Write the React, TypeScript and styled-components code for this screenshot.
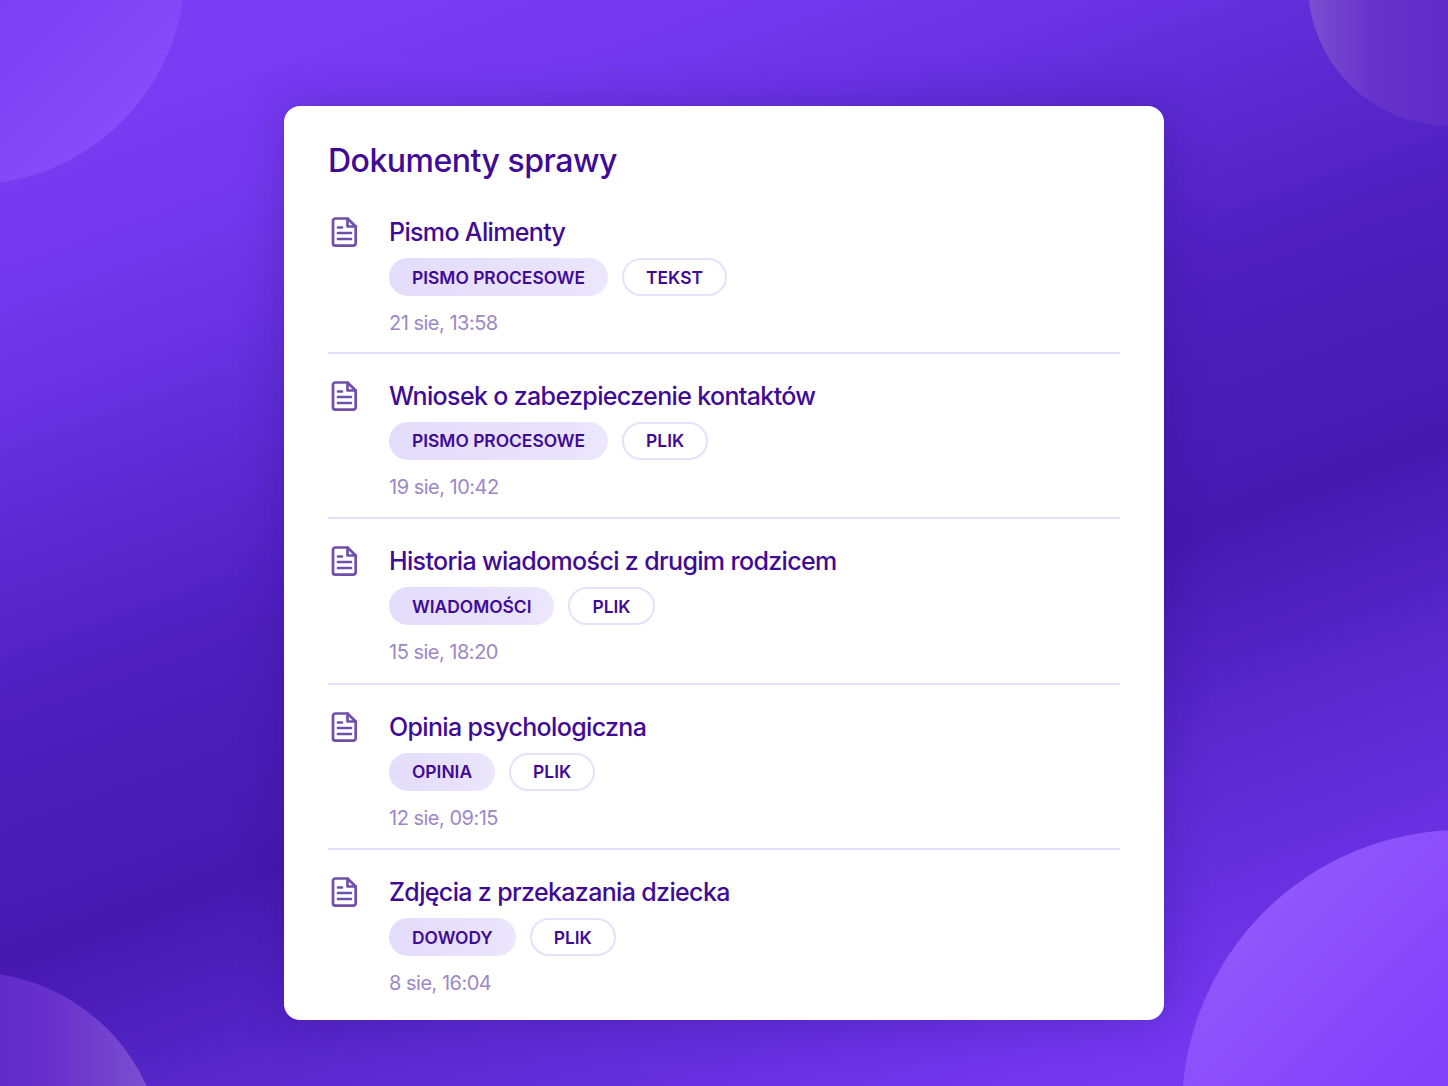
import React from "react";
import styled, { createGlobalStyle } from "styled-components";

const GlobalStyle = createGlobalStyle`
  html, body {
    margin: 0;
    padding: 0;
  }
  body {
    font-family: "Inter", "Noto Sans", sans-serif;
  }
`;

const Page = styled.div`
  position: relative;
  width: 1448px;
  height: 1086px;
  overflow: hidden;
  box-sizing: border-box;
  padding-top: 106px;
  display: flex;
  justify-content: center;
  align-items: flex-start;
  background: linear-gradient(
    160deg,
    #7c3ef6 0%,
    #753af0 16%,
    #6932e3 25%,
    #5c2bd4 33%,
    #4d1fbd 45%,
    #4519b0 60%,
    #5a2ad0 74%,
    #652fde 82%,
    #7337ee 90%,
    #7d3ff5 100%
  );
`;

const Bubble = styled.div<{ $size: number; $left: number; $top: number; $bg: string }>`
  position: absolute;
  width: ${(p) => p.$size}px;
  height: ${(p) => p.$size}px;
  left: ${(p) => p.$left}px;
  top: ${(p) => p.$top}px;
  border-radius: 50%;
  background: ${(p) => p.$bg};
`;

const Card = styled.section`
  position: relative;
  width: 880px;
  height: 914px;
  box-sizing: border-box;
  padding: 36px 44px 0;
  background: #fff;
  border-radius: 16px;
  box-shadow: 0 0 44px rgba(48, 14, 130, 0.32);
`;

const Title = styled.h1`
  margin: 0 0 8px;
  font-size: 32px;
  line-height: 38px;
  font-weight: 500;
  letter-spacing: -0.5px;
  color: #3f0b96;
`;

const Row = styled.article<{ $last?: boolean }>`
  display: flex;
  height: 165.5px;
  box-sizing: border-box;
  padding-top: 26px;
  border-bottom: ${(p) => (p.$last ? "none" : "2px solid #e3defa")};

  &:first-of-type {
    padding-top: 28px;
  }
`;

const IconSlot = styled.div`
  width: 61px;
  flex: none;
  color: #6f4fa8;
  svg {
    display: block;
  }
`;

const Body = styled.div`
  display: flex;
  flex-direction: column;
`;

const Name = styled.div`
  font-size: 25px;
  line-height: 32px;
  font-weight: 500;
  letter-spacing: -0.65px;
  color: #3f0b96;
`;

const Tags = styled.div`
  display: flex;
  gap: 14px;
  margin-top: 10px;
`;

const Tag = styled.span<{ $filled?: boolean }>`
  display: inline-flex;
  align-items: center;
  height: 38px;
  box-sizing: border-box;
  padding: 0 ${(p) => (p.$filled ? "23px" : "22px")};
  border-radius: 19px;
  font-size: 17.4px;
  font-weight: 600;
  color: #3f0b96;
  background: ${(p) => (p.$filled ? "linear-gradient(90deg, #e4ddfb 0%, #e8e2fb 70%, #ece7fc 100%)" : "#fff")};
  border: ${(p) => (p.$filled ? "none" : "2px solid #e6e0fb")};
`;

const Time = styled.time`
  margin-top: 13px;
  font-size: 20px;
  line-height: 28px;
  letter-spacing: -0.5px;
  color: #9c88c6;
`;

const DocIcon = () => (
  <svg width="32" height="32" viewBox="0 0 32 32" fill="none" stroke="currentColor" strokeWidth="2.7" strokeLinejoin="round" strokeLinecap="round">
    <path d="M7.500 2.500H19.500L27.700 10.500V27.200A2.500 2.500 0 0 1 25.200 29.700H7.500A2.500 2.500 0 0 1 5 27.200V5A2.500 2.500 0 0 1 7.500 2.500Z" />
    <path d="M19.500 2.500V10.500H27.700" />
    <path d="M10 11.500H14M10 17H23M10 23H23" />
  </svg>
);

const docs = [
  { name: "Pismo Alimenty", kind: "PISMO PROCESOWE", type: "TEKST", time: "21 sie, 13:58" },
  { name: "Wniosek o zabezpieczenie kontaktów", kind: "PISMO PROCESOWE", type: "PLIK", time: "19 sie, 10:42" },
  { name: "Historia wiadomości z drugim rodzicem", kind: "WIADOMOŚCI", type: "PLIK", time: "15 sie, 18:20" },
  { name: "Opinia psychologiczna", kind: "OPINIA", type: "PLIK", time: "12 sie, 09:15" },
  { name: "Zdjęcia z przekazania dziecka", kind: "DOWODY", type: "PLIK", time: "8 sie, 16:04" },
];

export default function App() {
  return (
    <Page>
      <GlobalStyle />
      <Bubble $size={432} $left={-247} $top={-247} $bg="linear-gradient(135deg, #7a3df0 50%, #7e42f4 66%, #8a4dfc 88%)" />
      <Bubble $size={284} $left={1308} $top={-158} $bg="linear-gradient(90deg, #7a50d0 0%, #6833cc 22%, #5e2bc8 50%)" />
      <Bubble $size={388} $left={-224} $top={972} $bg="linear-gradient(90deg, #5e2cc8 55%, #6a30cc 72%, #7a50d0 96%)" />
      <Bubble $size={560} $left={1182} $top={830} $bg="linear-gradient(135deg, #9058fb 14%, #8542fb 40%, #7e3ef4 62%)" />
      <Card>
        <Title>Dokumenty sprawy</Title>
        {docs.map((doc, i) => (
          <Row key={doc.name} $last={i === docs.length - 1}>
            <IconSlot>
              <DocIcon />
            </IconSlot>
            <Body>
              <Name>{doc.name}</Name>
              <Tags>
                <Tag $filled>{doc.kind}</Tag>
                <Tag>{doc.type}</Tag>
              </Tags>
              <Time>{doc.time}</Time>
            </Body>
          </Row>
        ))}
      </Card>
    </Page>
  );
}
